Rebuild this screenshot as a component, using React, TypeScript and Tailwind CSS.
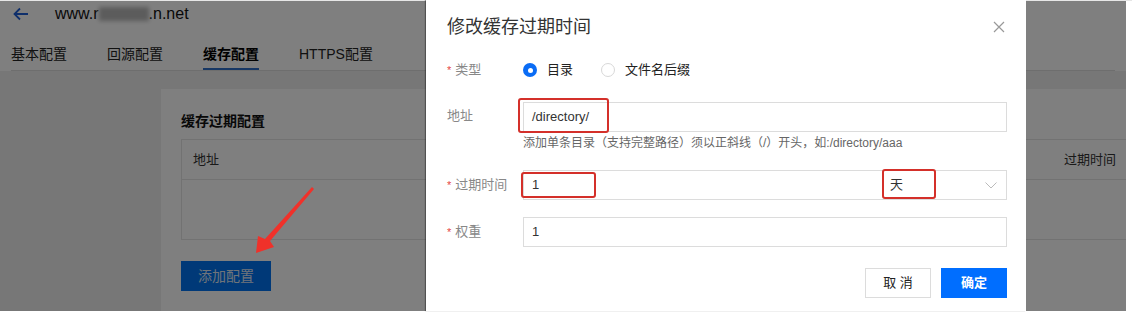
import type { FC } from "react";

const font = "font-['Liberation_Sans','Noto_Sans_CJK_SC',sans-serif]";

const Label: FC<{ text: string; required?: boolean }> = ({ text, required }) => (
    <div className="w-[76px] shrink-0 text-[13px] text-[#888]">
        {required ? <span className="text-[#e54545] mr-1 text-[11px]">*</span> : null}
        {text}
    </div>
);

const Page: FC = () => {
    return (
        <div className="w-[1126px] h-[311px] flex flex-col bg-[#eeeeee]">
            <div className="bg-white h-[71px] flex flex-col">
                <div className="h-[29px] flex items-center pl-[13px]">
                    <svg width="16" height="14" viewBox="0 0 16 14" fill="none" stroke="#1f5fd6" strokeWidth="1.8">
                        <path d="M15 7H2M7 1.5L1.5 7L7 12.5" />
                    </svg>
                    <div className="ml-[26px] text-[16px] text-[#111] flex items-center">
                        <span>www.r</span>
                        <span className="inline-block w-[50px] h-[14px] bg-[#b8b8b8] blur-[2px]"></span>
                        <span>.n.net</span>
                    </div>
                </div>
                <div className="mx-[11px] mt-[16px] flex gap-[40px] border-b border-[#dddddd] text-[14px]">
                    <div className="pb-[5px] text-[#222]">基本配置</div>
                    <div className="pb-[5px] text-[#222]">回源配置</div>
                    <div className="pb-[3px] font-bold text-[#000] border-b-2 border-[#2f6fc8]">缓存配置</div>
                    <div className="pb-[5px] text-[#222]">HTTPS配置</div>
                </div>
            </div>
            <div className="flex-1 flex pt-[18px] pl-[161px]">
                <div className="flex-1 bg-white pl-[20px] pt-[22px]">
                    <div className="text-[14px] font-bold text-[#111] h-[28px]">缓存过期配置</div>
                    <div className="border-y border-l border-[#e4e4e4]">
                        <div className="h-[40px] flex items-center justify-between border-b border-[#e4e4e4] text-[13px] text-[#333] pl-[11px] pr-[10px]">
                            <span>地址</span>
                            <span>过期时间</span>
                        </div>
                        <div className="h-[59px]"></div>
                    </div>
                    <button className="mt-[21px] w-[90px] h-[30px] bg-[#0072f0] text-[#dfe8f5] text-[14px]">添加配置</button>
                </div>
            </div>
        </div>
    );
};

const Modal: FC = () => {
    return (
        <div className="absolute left-[426px] top-0 w-[600px] h-[311px] bg-white shadow-[-1px_0_1px_rgba(0,0,0,0.35)] pl-[21px] pr-[19px]">
            <div className="h-[54px] flex items-center justify-between">
                <div className="text-[18px] text-[#333]">修改缓存过期时间</div>
                <svg width="12" height="12" viewBox="0 0 12 12" stroke="#999" strokeWidth="1.2" className="mr-[2px]">
                    <path d="M1 1L11 11M11 1L1 11" />
                </svg>
            </div>
            <div className="h-[32px] flex items-center">
                <Label text="类型" required />
                <div className="flex items-center text-[13px] text-[#222]">
                    <span className="w-[14px] h-[14px] rounded-full bg-[#0a6cf5] flex items-center justify-center">
                        <span className="w-[5px] h-[5px] rounded-full bg-white"></span>
                    </span>
                    <span className="ml-[10px]">目录</span>
                    <span className="ml-[28px] w-[14px] h-[14px] rounded-full border border-[#d8d8d8]"></span>
                    <span className="ml-[10px]">文件名后缀</span>
                </div>
            </div>
            <div className="mt-[16px] flex items-start">
                <div className="pt-[4px]"><Label text="地址" /></div>
                <div className="flex-1">
                    <div className="h-[30px] border border-[#dcdcdc] flex items-center pl-[8px] text-[13px] text-[#333]">/directory/</div>
                    <div className="mt-[2px] text-[12px] text-[#666]">添加单条目录（支持完整路径）须以正斜线（/）开头，如:/directory/aaa</div>
                </div>
            </div>
            <div className="mt-[18px] flex items-center">
                <Label text="过期时间" required />
                <div className="flex-1 h-[30px] border border-[#dcdcdc] flex items-center pl-[8px] text-[13px] text-[#333]">
                    <span className="flex-1">1</span>
                    <span className="w-[95px]">天</span>
                    <svg width="12" height="7" viewBox="0 0 12 7" fill="none" stroke="#bbb" strokeWidth="1" className="mr-[9px]">
                        <path d="M0.5 0.5L6 6L11.5 0.5" />
                    </svg>
                </div>
            </div>
            <div className="mt-[17px] flex items-center">
                <Label text="权重" required />
                <div className="flex-1 h-[30px] border border-[#dcdcdc] flex items-center pl-[8px] text-[13px] text-[#333]">1</div>
            </div>
            <div className="mt-[21px] flex justify-end gap-[10px]">
                <button className="w-[66px] h-[30px] border border-[#dcdcdc] bg-white text-[13px] text-[#222]">取 消</button>
                <button className="w-[66px] h-[30px] bg-[#006eff] text-white text-[13px] font-bold">确定</button>
            </div>
        </div>
    );
};

export default function App() {
    return (
        <div className={`relative w-[1132px] h-[313px] overflow-hidden bg-white ${font}`}>
            <Page />
            <div className="absolute left-0 top-0 w-[1126px] h-[311px] bg-black/50"></div>
            <div className="absolute left-0 top-0 w-[1132px] h-px bg-[#e6e6e6]"></div>
            <Modal />
            {/* annotation boxes */}
            <div className="absolute left-[518px] top-[98px] w-[91px] h-[35px] border-[2.5px] border-[#d4302a] rounded-[3px]"></div>
            <div className="absolute left-[521px] top-[172px] w-[75px] h-[26px] border-[2.5px] border-[#d4302a] rounded-[3px]"></div>
            <div className="absolute left-[882px] top-[169px] w-[54px] h-[30px] border-[2.5px] border-[#d4302a] rounded-[3px]"></div>
            <svg className="absolute left-0 top-0" width="1132" height="313">
                <polygon points="312,187 314,189 270,241 274,247 256,253 258,236 265,239" fill="#f0312a" />
            </svg>
        </div>
    );
}
